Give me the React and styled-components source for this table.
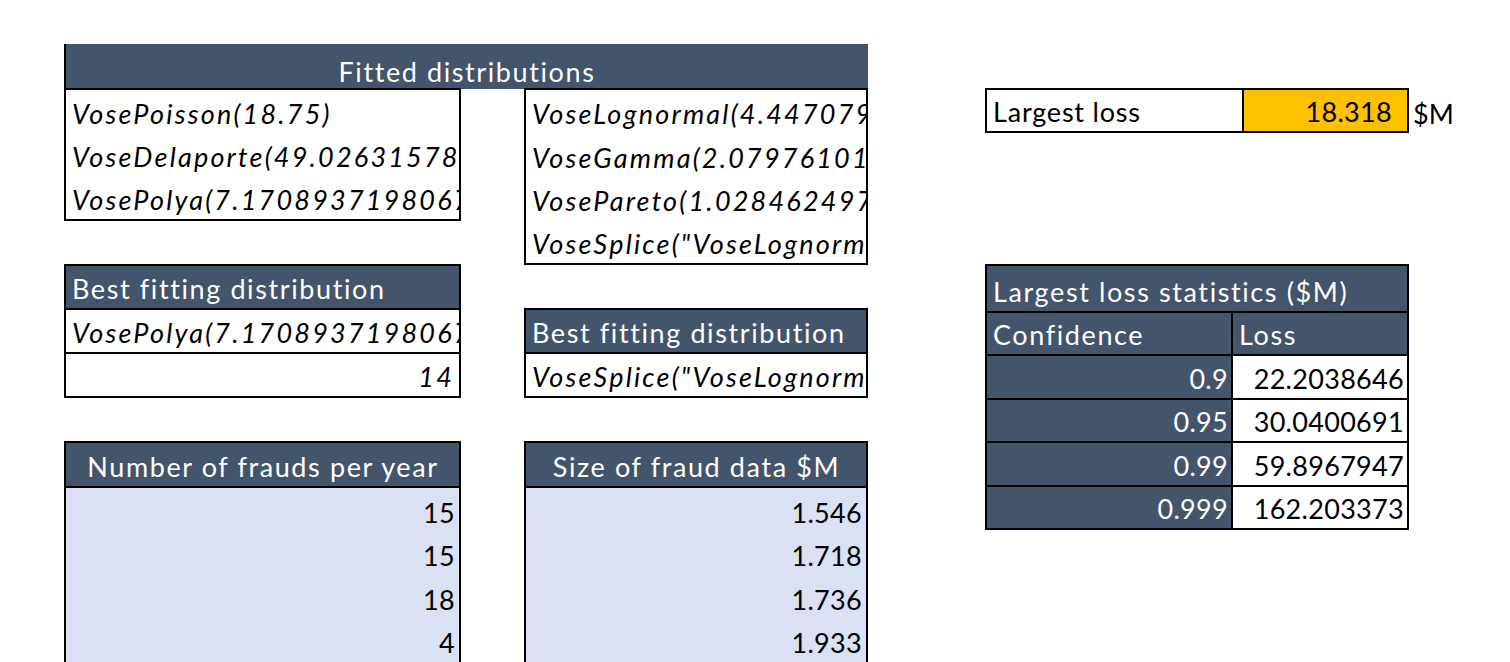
import React from 'react';
import styled, { createGlobalStyle } from 'styled-components';

const GlobalStyle = createGlobalStyle`
  html, body {
    margin: 0;
    padding: 0;
    background: #ffffff;
  }
  body {
    font-family: Lato, "Open Sans", sans-serif;
    color: #000;
    overflow: hidden;
  }
`;

const HEAD = '#44546a';
const LIGHT = '#d9e1f2';
const GOLD = '#ffc000';

// spreadsheet grid: cols = margin, A, gap, B, gap, C, D, unit
const Sheet = styled.div`
  display: grid;
  grid-template-columns: 64px 397px 63px 344px 117px 246px 178px 1fr;
  grid-template-rows: 44px 45px 44px 44px 44px 44px 44px 44px 45px 44px 44px 44px 44px 44px 44px;
  width: 1510px;
  height: 662px;
  overflow: hidden;
`;

const Area = styled.div`
  grid-row: ${(p) => p.$row};
  grid-column: ${(p) => p.$col};
  min-width: 0;
  display: flex;
  flex-direction: column;
`;

const Banner = styled(Area)`
  background: ${HEAD};
  border-left: 2px solid #000;
  color: #fff;
  font-size: 27px;
  letter-spacing: 1.6px;
  align-items: center;
  justify-content: flex-end;
  padding-bottom: 1px;
`;

const Box = styled(Area)`
  border: 2px solid #000;
  border-bottom: ${(p) => (p.$open ? 'none' : '2px solid #000')};
  margin-top: -1px;
`;

const spacing = (p) => {
  if (p.$num) return '0.3px';
  if (p.$italic) return '2.2px';
  if (p.$dark) return '1.6px';
  return '0.8px';
};

const Cell = styled.div`
  flex: 1;
  display: flex;
  align-items: flex-end;
  justify-content: ${(p) => (p.$align === 'right' ? 'flex-end' : p.$align === 'center' ? 'center' : 'flex-start')};
  padding: 0 ${(p) => p.$padR || 5}px 3px 6px;
  font-size: 27px;
  letter-spacing: ${spacing};
  font-style: ${(p) => (p.$italic ? 'italic' : 'normal')};
  white-space: nowrap;
  overflow: hidden;
  background: ${(p) => p.$bg || 'transparent'};
  color: ${(p) => (p.$dark ? '#fff' : '#000')};
  border-top: ${(p) => (p.$lined ? '2px solid #000' : 'none')};
`;

const Row = styled.div`
  flex: 1;
  display: grid;
  grid-template-columns: 244px 1fr;
  border-top: ${(p) => (p.$lined ? '2px solid #000' : 'none')};
  min-height: 0;

  & > div + div {
    border-left: 2px solid #000;
  }
`;

const LossBox = styled(Area)`
  flex-direction: row;
  border: 2px solid #000;
  margin-top: -1px;

  & > div + div {
    border-left: 2px solid #000;
  }
`;

const Unit = styled.div`
  grid-row: 3;
  grid-column: 8;
  display: flex;
  align-items: flex-end;
  padding: 0 0 3px 4px;
  font-size: 27px;
`;

const fitted = ['VosePoisson(18.75)', 'VoseDelaporte(49.02631578947', 'VosePolya(7.170893719806763'];
const severity = ['VoseLognormal(4.4470790', 'VoseGamma(2.0797610123', 'VosePareto(1.0284624979', 'VoseSplice("VoseLognormal'];
const stats = [
  ['0.9', '22.2038646'],
  ['0.95', '30.0400691'],
  ['0.99', '59.8967947'],
  ['0.999', '162.203373'],
];
const counts = ['15', '15', '18', '4'];
const sizes = ['1.546', '1.718', '1.736', '1.933'];

const App = () => (
  <>
    <GlobalStyle />
    <Sheet>
      <Banner $row="2" $col="2 / 5">Fitted distributions</Banner>

      <Box $row="3 / 6" $col="2">
        {fitted.map((f) => (
          <Cell key={f} $italic>{f}</Cell>
        ))}
      </Box>

      <Box $row="3 / 7" $col="4">
        {severity.map((f) => (
          <Cell key={f} $italic>{f}</Cell>
        ))}
      </Box>

      <LossBox $row="3" $col="6 / 8">
        <Cell style={{ flex: '0 0 244px' }}>Largest loss</Cell>
        <Cell $num $align="right" $bg={GOLD} $padR={15}>18.318</Cell>
      </LossBox>
      <Unit>$M</Unit>

      <Box $row="7 / 10" $col="2">
        <Cell $bg={HEAD} $dark>Best fitting distribution</Cell>
        <Cell $italic $lined>VosePolya(7.170893719806763</Cell>
        <Cell $italic $lined $align="right">14</Cell>
      </Box>

      <Box $row="7 / 13" $col="6 / 8">
        <Cell $bg={HEAD} $dark>Largest loss statistics ($M)</Cell>
        <Row $lined>
          <Cell $bg={HEAD} $dark>Confidence</Cell>
          <Cell $bg={HEAD} $dark>Loss</Cell>
        </Row>
        {stats.map(([c, v]) => (
          <Row key={c} $lined>
            <Cell $num $bg={HEAD} $dark $align="right" $padR={3}>{c}</Cell>
            <Cell $num $align="right" $padR={3}>{v}</Cell>
          </Row>
        ))}
      </Box>

      <Box $row="8 / 10" $col="4">
        <Cell $bg={HEAD} $dark>Best fitting distribution</Cell>
        <Cell $italic $lined>VoseSplice("VoseLognormal</Cell>
      </Box>

      <Box $row="11 / 16" $col="2" $open>
        <Cell $bg={HEAD} $dark $align="center">Number of frauds per year</Cell>
        {counts.map((n, i) => (
          <Cell key={i} $num $bg={LIGHT} $align="right" $padR={4} $lined={i === 0}>{n}</Cell>
        ))}
      </Box>

      <Box $row="11 / 16" $col="4" $open>
        <Cell $bg={HEAD} $dark $align="center">Size of fraud data $M</Cell>
        {sizes.map((n, i) => (
          <Cell key={i} $num $bg={LIGHT} $align="right" $padR={4} $lined={i === 0}>{n}</Cell>
        ))}
      </Box>
    </Sheet>
  </>
);

export default App;
